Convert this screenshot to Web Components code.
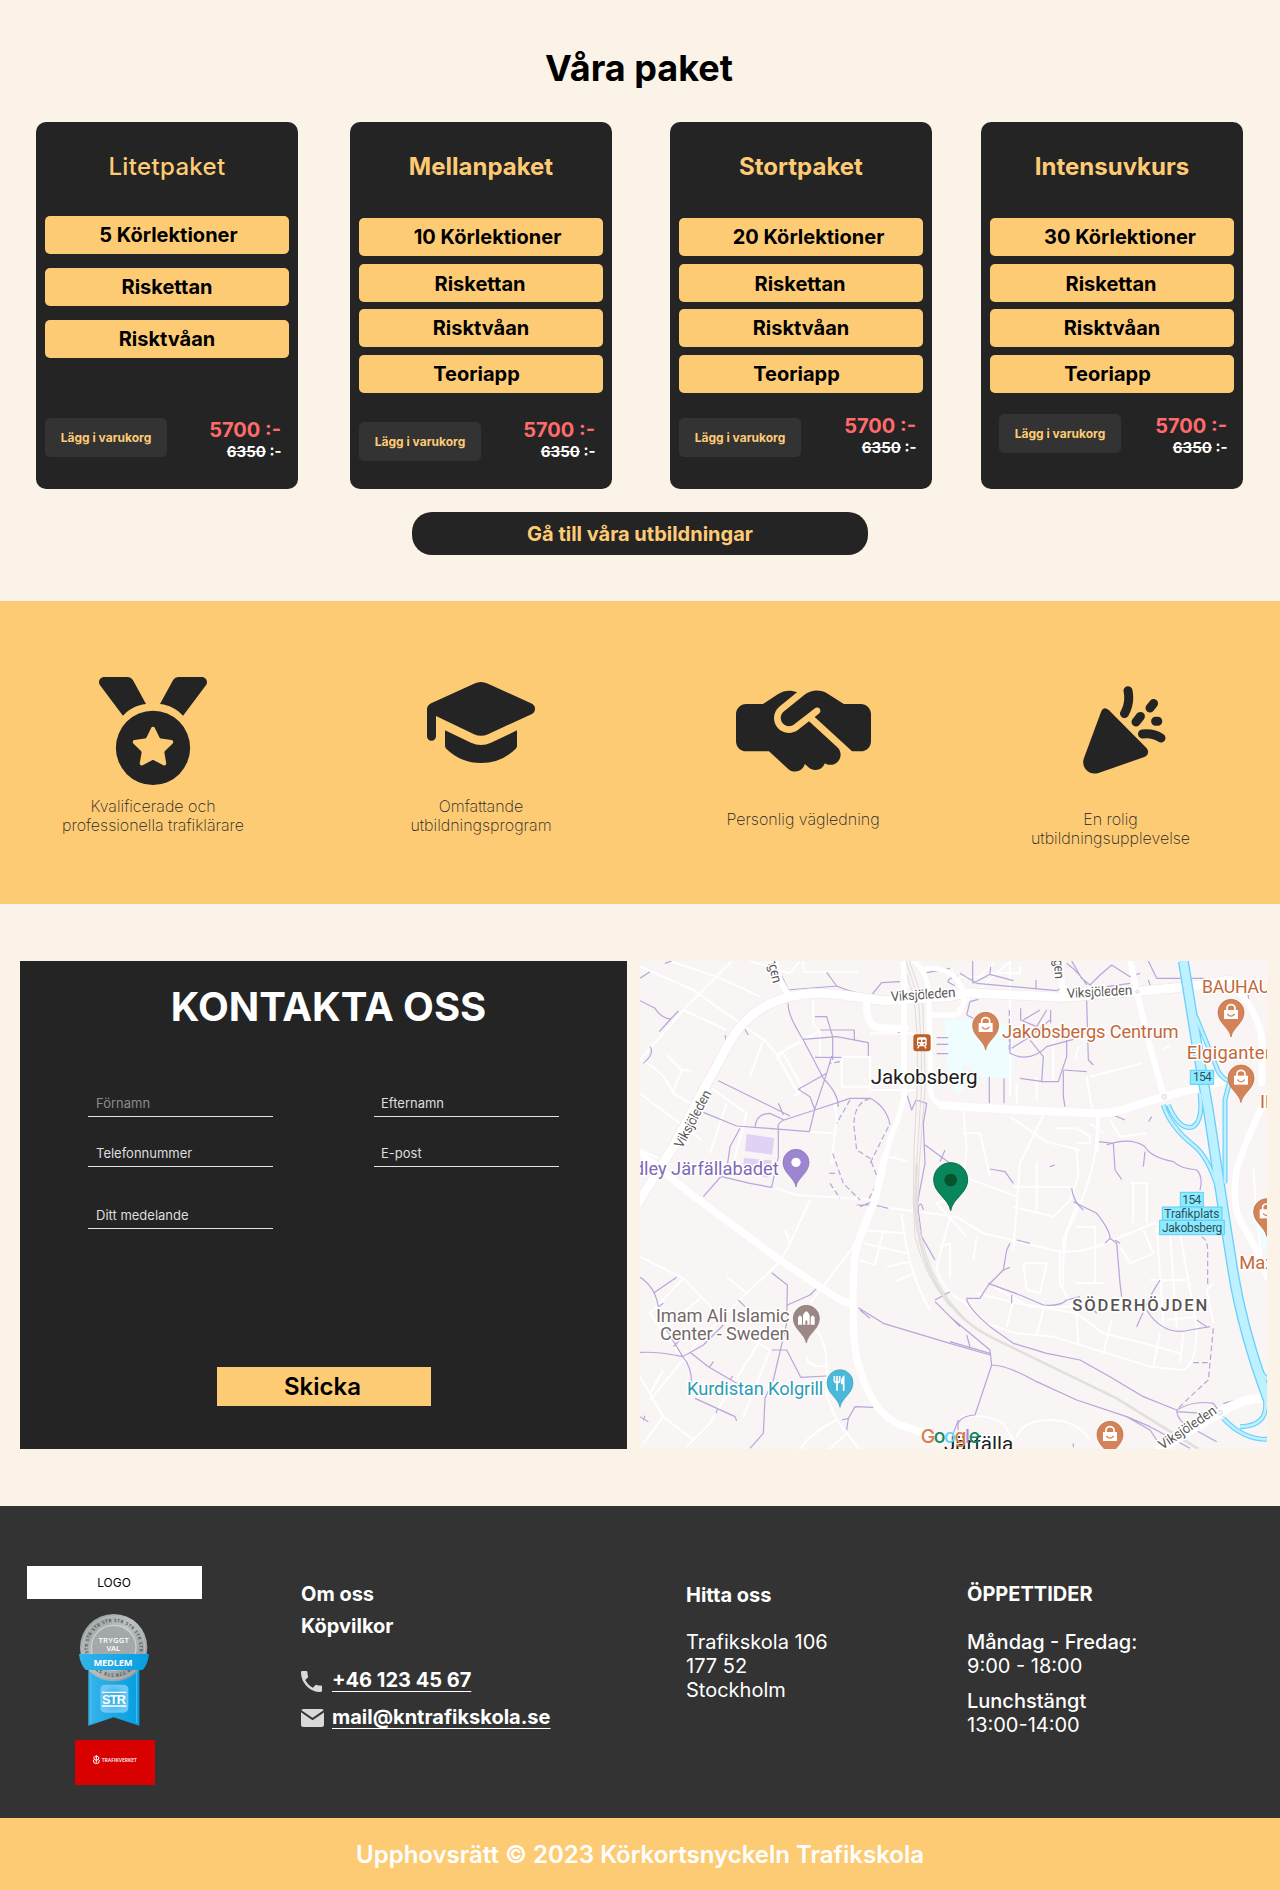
<!DOCTYPE html>
<html lang="sv">
<head>
<meta charset="utf-8">
<title>Körkortsnyckeln Trafikskola</title>
<style>
html,body{margin:0;padding:0}
body{background:#fbf3e7;font-family:Inter,"Liberation Sans",sans-serif;color:#000;width:1280px;overflow-x:hidden}
</style>
</head>
<body>
<packages-section>
  <package-card style="--x:36px;--list:35px;--btn:8px;--price:8px" name="Litetpaket" light gaps="14,14" rows="5 Körlektioner:3|Riskettan:0|Risktvåan:0"></package-card>
  <package-card style="--x:52px;--btn:12px;--price:8px" name="Mellanpaket" rows="10 Körlektioner:13|Riskettan:-2|Risktvåan:0|Teoriapp:-9"></package-card>
  <package-card style="--x:58px;--btn:8px;--price:4px;--pr:16px" name="Stortpaket" rows="20 Körlektioner:15|Riskettan:-2|Risktvåan:0|Teoriapp:-9"></package-card>
  <package-card style="--x:49px;--btn:4px;--price:4px;--pr:16px;--bl:18px" name="Intensuvkurs" rows="30 Körlektioner:16|Riskettan:-2|Risktvåan:0|Teoriapp:-9"></package-card>
</packages-section>

<feature-band>
  <feature-item style="--x:53px;--top:76px;--gap:12px">
    <svg slot="icon" width="108" height="108" viewBox="0 0 512 512" fill="#242424"><path d="M4.1 38.2C1.4 34.2 0 29.4 0 24.6C0 11 11 0 24.6 0H133.9c11.2 0 21.7 5.9 27.4 15.5l61.5 112.1c-48.2 6.1-80.3 24.6-109.4 55.9L4.1 38.2zm503.7 0L398.6 183.5c-29.1-31.3-61.2-49.8-109.4-55.9L350.7 15.5C356.5 5.9 366.9 0 378.1 0H487.4C501 0 512 11 512 24.6c0 4.8-1.4 9.6-4.1 13.6zM80 336a176 176 0 1 1 352 0A176 176 0 1 1 80 336zm184.4-94.9c-3.4-7-13.3-7-16.8 0l-22.4 45.4c-1.4 2.8-4 4.7-7 5.1L168 298.9c-7.7 1.1-10.7 10.5-5.2 16l36.3 35.4c2.2 2.2 3.2 5.2 2.7 8.3l-8.6 49.9c-1.3 7.6 6.7 13.5 13.6 9.9l44.8-23.6c2.7-1.4 6-1.4 8.7 0l44.8 23.6c6.9 3.6 14.9-2.2 13.6-9.9l-8.6-49.9c-.5-3 .5-6.1 2.7-8.3l36.3-35.4c5.6-5.4 2.5-14.8-5.2-16l-50.1-7.3c-3-.4-5.7-2.4-7-5.1l-22.4-45.4z"/></svg>
    Kvalificerade och<br>professionella trafiklärare
  </feature-item>
  <feature-item style="--x:128px;--top:81px;--gap:33.5px">
    <svg slot="icon" width="108" height="81" viewBox="0 0 108 81" fill="#242424"><path d="M47 1.8Q54 -1.6 61 1.8L104.5 21.5Q108 23.3 108 26.7Q108 30.5 104.5 32.2L61 52.2Q54 55.4 47 52.2L9 34V54.2A4.5 4.5 0 0 1 0 54.2V27Q0 23.6 3.6 21.5Z"/><path d="M18 48.3L44 60.8Q54 65.4 64 60.8L90 48.3V64Q90 65.5 88.5 67Q74 81 54 81Q34 81 19.5 67Q18 65.5 18 64Z"/></svg>
    Omfattande<br>utbildningsprogram
  </feature-item>
  <feature-item style="--x:122px;--top:89px;--gap:37.5px">
    <svg slot="icon" width="135" height="82" viewBox="0 62 640 387" fill="#242424"><path d="M323.4 85.2l-96.8 78.4c-16.1 13-19.2 36.4-7 53.1c12.9 17.8 38 21.3 55.3 7.8l99.3-77.2c7-5.4 17-4.2 22.5 2.8s4.2 17-2.8 22.5l-20.9 16.2L550.2 352H592c26.5 0 48-21.5 48-48V176c0-26.5-21.5-48-48-48H516h-4-.7l-3.9-2.5L434.8 79c-15.3-9.8-33.2-15-51.4-15c-21.8 0-43 7.5-60 21.2zm22.8 124.4l-51.7 40.2C263 274.3 217.3 268 193.7 235.6c-22.2-30.5-16.6-73.1 12.7-96.8l83.2-67.3c-11.6-4.9-24.1-7.4-36.8-7.4C234 64 215.7 69.6 200 80l-72 48H48c-26.5 0-48 21.5-48 48V304c0 26.5 21.5 48 48 48H156.2l91.4 83.4c19.6 17.9 49.9 16.5 67.8-3.1c5.5-6.1 9.2-13.2 11.1-20.6l17 15.6c19.5 17.9 49.9 16.6 67.8-2.9c4.5-4.9 7.8-10.6 9.9-16.5c19.4 13 45.8 10.3 62.1-7.5c17.9-19.5 16.6-49.9-2.9-67.8l-134.2-123z"/></svg>
    Personlig vägledning
  </feature-item>
  <feature-item style="--x:107.5px;--top:85px;--gap:35.5px">
    <svg slot="icon" width="83" height="88" viewBox="0 0 83 88" fill="#242424" style="margin-left:27px"><path d="M18.2 25.5Q20.5 19.8 26 24.3L63.5 62Q67.5 67 62 70.8L15.5 87Q7.5 89 2.4 83Q-1 78.5 .8 72.5Z"/><g fill="none" stroke="#242424" stroke-width="9" stroke-linecap="round"><path d="M45 4.7Q47.5 17 41.5 27.6"/><path d="M70.6 17.5L67 22M57.4 30.4L53 36M72.6 35.2H74.8"/><path d="M59.5 48Q70 46.6 78 52"/></g></svg>
    En rolig<br>utbildningsupplevelse
  </feature-item>
</feature-band>

<contact-section></contact-section>
<site-footer></site-footer>

<script>
const define = (name, html, setup) => {
  const t = document.createElement('template');
  t.innerHTML = html;
  customElements.define(name, class extends HTMLElement {
    connectedCallback() {
      if (this.shadowRoot) return;
      const root = this.attachShadow({ mode: 'open' });
      root.appendChild(t.content.cloneNode(true));
      if (setup) setup(this, root);
    }
  });
};

define('package-card', `
<style>
:host{display:flex;flex-direction:column;box-sizing:border-box;width:262px;height:366.5px;margin-left:var(--x);background:#242424;border-radius:10px;padding:31px 9px 0}
h3{margin:0 0 var(--list,37px);font-size:24px;line-height:28px;font-weight:700;color:#fecb75;text-align:center}
:host([light]) h3{font-weight:500;letter-spacing:.35px}
.rows{display:flex;flex-direction:column}
.row{height:38px;line-height:38.6px;border-radius:5px;background:#fecb75;color:#000;text-align:center;font-size:20px;font-weight:700}
.foot{margin-top:auto;height:78.5px;display:flex;justify-content:space-between;align-items:flex-start}
button{all:unset;box-sizing:border-box;width:122px;height:39px;line-height:40px;margin:var(--btn) 0 0 calc(var(--bl,9px) - 9px);border-radius:5px;background:#333;color:#fecb75;text-align:center;font-size:12px;font-weight:700}
.price{margin:var(--price) calc(var(--pr,17px) - 9px) 0 0;text-align:right;font-weight:700}
.now{font-size:20px;line-height:24px;color:#ff6b6b}
.old{font-size:15px;line-height:18px;margin-top:1px;margin-right:-.5px;color:#fff}
</style>
<h3></h3><div class="rows"></div>
<div class="foot"><button>Lägg i varukorg</button><div class="price"><div class="now">5700 :-</div><div class="old"><s>6350</s> :-</div></div></div>`,
(host, root) => {
  root.querySelector('h3').textContent = host.getAttribute('name');
  const gaps = (host.getAttribute('gaps') || '8,7,8').split(',');
  const list = root.querySelector('.rows');
  host.getAttribute('rows').split('|').forEach((r, i) => {
    const [label, shift] = r.split(':');
    const d = document.createElement('div');
    d.className = 'row';
    d.textContent = label;
    d.style.textIndent = shift + 'px';
    if (i) d.style.marginTop = gaps[i - 1] + 'px';
    if (i === 1 && gaps[0] === '8') d.style.lineHeight = '40px';
    list.appendChild(d);
  });
});

define('packages-section', `
<style>
:host{display:flex;flex-direction:column;align-items:center;box-sizing:border-box;height:601px;padding-top:46px}
h2{margin:0;margin-left:-2px;font-size:36px;line-height:44px;font-weight:700}
.cards{display:flex;align-self:stretch;margin:32px 0 23.5px}
a{display:block;width:456px;height:43px;line-height:44px;border-radius:20px;background:#242424;color:#fecb75;text-align:center;font-size:20px;font-weight:700}
</style>
<h2>Våra paket</h2><div class="cards"><slot></slot></div><a>Gå till våra utbildningar</a>`);

define('feature-item', `
<style>
:host{display:flex;flex-direction:column;align-items:center;width:200px;margin-left:var(--x);padding-top:var(--top)}
p{margin:var(--gap) 0 0;font-size:16px;line-height:19.2px;font-weight:200;color:#242424;text-align:center;white-space:nowrap}
</style>
<slot name="icon"></slot><p><slot></slot></p>`);

define('feature-band', `
<style>:host{display:flex;align-items:flex-start;box-sizing:border-box;height:303px;background:#fecb75}</style><slot></slot>`);

define('form-field', `
<style>
:host{display:block;box-sizing:border-box;height:22px;padding-left:8px;border-bottom:1px solid #e3e3e3;font-size:13px;line-height:17px;color:#dedede}
:host([muted]){color:#8b8b8b}
</style><slot></slot>`);

define('contact-form', `
<style>
:host{display:flex;flex-direction:column;box-sizing:border-box;width:607px;height:488px;background:#242424;padding-top:22px}
h2{margin:0;padding-left:10px;text-align:center;color:#fff;font-size:40px;line-height:48px;font-weight:700;letter-spacing:-.05px}
.grid{display:grid;grid-template-columns:185px 185px;column-gap:101px;margin:64px 0 0 68px}
.grid>:nth-child(n+3){margin-top:28px;line-height:16px}
.grid>:nth-child(5){margin-top:40px}
.grid>:nth-child(2),.grid>:nth-child(4){padding-left:7px}
button{all:unset;width:214px;height:39px;line-height:39px;margin:138px 0 0 197px;background:#fecb75;color:#000;text-align:center;text-indent:-3px;font-size:24px;font-weight:600}
</style>
<h2>KONTAKTA OSS</h2>
<div class="grid"><form-field muted>Förnamn</form-field><form-field>Efternamn</form-field><form-field>Telefonnummer</form-field><form-field>E-post</form-field><form-field>Ditt medelande</form-field></div>
<button>Skicka</button>`);

define('area-map', `
<style>
:host{display:block;width:627px;height:488px}
svg{display:block}
text{font-family:Roboto,sans-serif}
.m{fill:none;stroke:#fff;stroke-width:6;stroke-linejoin:round}
.p{fill:none;stroke:#b9a5db;stroke-width:3.6;stroke-linejoin:round}
.d{stroke-dasharray:17 9}
.r{fill:none;stroke:#fff;stroke-linejoin:round;stroke-linecap:round}
.l{paint-order:stroke;stroke:#fff;stroke-width:9;stroke-linejoin:round}
.o{fill:#c4683a}.g{fill:#5c5757;font-size:41px}
</style>
<svg width="627" height="488" viewBox="30 33 1881 1464">
<defs>
<path id="pin" d="M0 74C-5 45 -39 33 -39 0A39 39 0 1 1 39 0C39 33 5 45 0 74Z"/>
<g id="shop"><use href="#pin" fill="#d48358" stroke="#bd6840" stroke-width="2"/><path d="M-21 -7H21V20H-21Z" fill="#fff"/><path d="M-12 -6V-13A12 10 0 0 1 12 -13V-6" fill="none" stroke="#fff" stroke-width="5"/><path d="M-11 5Q0 18 11 5" fill="none" stroke="#d48358" stroke-width="4"/></g>
</defs>
<rect x="30" y="33" width="1881" height="1464" fill="#f8f5f4"/>
<path d="M945 210L1100 205L1148 250L1150 385L1060 385L1000 340L1000 425L975 430L945 320Z" fill="#effdff"/>
<path d="M1860 790L1911 760V920Z" fill="#effdff"/>
<path d="M350 552L433 564L426 614L345 603ZM342 624L388 628L385 648L340 645ZM400 630H424V650H400ZM398 672H420V682H398Z" fill="#dfd2f4"/>
<g class="m">
<path d="M30 50L190 120L345 230L400 270L360 380M120 33L260 80L390 140M160 180L290 240M305 33L160 180L30 330M30 330Q100 360 130 430L215 480M110 315L155 360L185 362M155 360L130 425M30 430L215 570M245 415L350 490L310 640M290 460L240 610M400 265L440 315L505 430M440 315L510 275M460 310L520 420L490 440M360 33L480 70L510 33M520 33V65H686M550 150V225L570 240V320H720V420H860M720 250H835Q860 250 850 270M635 320V410H720M610 440L620 500L605 640M440 330Q460 290 510 280L570 240M30 600L120 640M440 715L500 735L740 750M535 545L610 550"/>
<path d="M780 620L830 633M1000 480L1010 600L1000 680L1160 740M1000 550H1050L1080 680M1140 500L1250 575L1350 600M1240 495L1170 640L1150 900M1400 500Q1410 600 1360 740L1310 850L1300 930M1150 710H1320M1220 640V780M1280 535H1340L1380 560V580H1340M1340 600L1345 680L1320 750M1440 510L1470 560L1550 550M1380 520L1420 550M1370 380L1390 500M1380 380L1535 340M1220 380V450M1335 330L1345 290M1270 270V400M1160 400V460M1510 700V820M1550 700V820M1500 700H1555M980 180L1140 33M980 80H1050L1090 40M1080 70H1170V50M1140 33V440M1600 300L1620 285M1870 650L1880 800L1900 960"/>
<path d="M30 920L160 985L290 1120L420 1200M290 980L350 1030L450 935L480 880L540 750M465 840L480 880M350 1030L200 1180L60 1350M160 985L60 1090L170 1240M210 1045L100 1140M390 1170L240 1420L170 1490M420 1200L340 1400M30 1280L100 1400L190 1470M100 1400L40 1480M100 1260L60 1330M540 1060L670 890L720 760M560 1140Q590 1180 590 1250V1340L620 1410L690 1500M530 1220Q530 1250 590 1250M620 1410Q540 1450 510 1497M650 1450L600 1497M760 840L735 945L690 930M700 880L830 910M690 840L830 850M815 790Q830 960 900 1080M770 950L840 935M795 995L850 970M1010 860L920 760L970 740"/>
<path d="M750 770L980 800L1060 850L1290 905Q1370 910 1450 870L1570 820L1640 830M960 800L920 950Q930 1020 1010 1060M930 890L960 880V980M1290 905V1000L1340 1100L1345 1180M1345 750L1300 870V1010M1000 1055L1070 1120L1160 1150L1270 1160L1400 1200L1560 1250L1660 1260Q1700 1240 1700 1130L1650 850M1040 1030L1160 1060L1340 1090L1420 1150L1540 1180L1650 1210M1090 1010L1200 1070L1320 1070M1130 1130L1150 1050M1220 1155L1240 1080M1420 1210L1445 1110M1570 1250L1590 1150M1660 1150L1650 1240M1180 940H1250L1230 1030L1190 1020L1180 940M1340 830H1395V1000M1335 1000H1420M1470 890L1500 940L1570 910L1540 840M1580 830L1600 1120M1560 990H1670M1040 860L1030 930M1620 850L1640 1130M1610 1110L1700 1100M990 1400Q1070 1390 1120 1420L1150 1470M1160 1460Q1180 1410 1260 1410Q1340 1410 1380 1470M1150 770L1270 800L1320 750M1750 1120L1730 1020L1750 1000"/>
</g>
<g class="p">
<path d="M30 85L60 65M105 40L125 33M30 152L75 175Q95 205 122 207L145 183M122 207L88 245M60 290Q75 310 40 340M235 380L290 280L285 255M330 215L355 255M265 392L480 498M445 460L460 495M220 487L320 528L375 532L538 545L555 475L590 370M375 530Q380 490 420 490L462 510Q440 520 445 535V620L425 712L360 700L275 680M330 535L300 590L290 660L220 740M555 480L462 510M555 480L660 445H720Q770 470 780 525M555 322H635M605 318L590 370L505 418L540 440L555 480M475 160Q470 190 520 270L580 385Q625 430 625 470M520 268L620 260L715 278V318M570 240H673V270M555 200H590L608 260V330M470 120L620 108L590 67M475 120L450 67M620 108Q670 130 725 135L755 98L810 95M790 240L810 248M832 437L845 480L858 450L890 460L880 520L885 640L862 760L875 860L915 930M885 585L960 640M930 635L945 600M920 263H955M920 283H955M920 311H955M890 68L960 55M985 78Q950 85 955 97L975 107"/>
<path d="M990 70L1040 100L1280 122L1300 110M1028 33V100M1030 100L1080 73L1150 92M1080 73L1082 50M1218 90V120M1325 33L1355 85L1380 105L1410 75L1445 45L1500 80L1530 70M1310 40Q1350 70 1370 105M1430 110L1500 100M1555 33L1580 85H1720L1780 110M1555 90L1560 105M1010 195L1020 155L1045 148M1010 195L1030 205M1172 175V210L1220 230L1250 180M1180 210L1230 180M1262 180V220M1140 265V310Q1200 340 1250 290L1330 268M1145 295L1200 260L1260 210M1200 270L1240 320L1235 395H1285L1310 320V270M1370 150L1375 330L1390 345M1300 360L1370 365M1300 362V440L1305 470M1170 385L1240 395M1078 380V460M1122 385V460M1405 575L1450 580L1455 660L1475 688M1430 585Q1500 560 1545 590Q1560 620 1630 635Q1650 655 1700 660Q1720 680 1710 720M1545 605L1540 650M1450 495L1485 510M1556 515L1565 500M1080 657L1125 665L1150 700M1260 650L1275 645M1325 715Q1330 755 1360 780"/>
<path d="M30 982Q75 1010 85 1070L100 1060M72 1028L140 982M30 1207Q90 1205 158 1220L220 1185L280 1125M158 1220Q185 1250 185 1300M180 1207L235 1250L320 1300M238 1252L250 1235M300 1290L308 1278M130 1190L150 1170M110 1140L158 1220M425 968L472 1005L470 1120L430 1290L405 1345L400 1450L360 1495M472 1065L540 1035L560 1015M325 1050L345 1070M425 1200H470L512 1282L590 1278M195 1345L315 1400L320 1412M258 1390L263 1375M30 1400L55 1415M40 1410L45 1397M635 1410L655 1405L675 1370L730 1372M655 1405L650 1440M685 1073L760 1120L960 1180L1080 1215M690 1080L720 1105M985 1410L970 1450M680 765H735L775 775M690 770L740 750"/>
<path d="M860 790Q870 740 880 780M1330 755L1400 790Q1440 840 1440 865L1460 880L1470 1000L1475 1040M1440 865L1425 880M1455 870L1470 880M1120 960L1075 1005L1050 1045L1010 1045Q1010 1070 1080 1130L1150 1180L1250 1210L1350 1230L1440 1280L1540 1340L1640 1380M1120 960L1130 900L1140 880M1120 960L1140 952M1075 1000L1170 1035L1240 1065Q1290 1070 1310 1050L1350 1040M1145 1035V1060M960 1100L1080 1200L1085 1245L1035 1395Q975 1400 985 1440M960 1175L1080 1210M1010 1155L1020 1190M1085 1245Q1130 1245 1220 1295L1340 1350L1490 1400L1560 1440L1590 1485M1490 1400L1560 1430L1680 1495M1640 1380Q1640 1400 1660 1420L1760 1475M1640 1380Q1690 1350 1750 1360L1780 1400M1640 1385L1720 1390M915 1050L960 1025M915 1055L990 1130M1590 990L1560 1040L1520 1130M1550 1080Q1600 1160 1680 1140L1740 1130M1700 1110L1730 1130M1160 870L1200 880M1385 1070L1400 1090M1330 1492V1480M1780 1360L1860 1340"/>
<path class="d" d="M720 445Q670 460 672 530L680 600L720 625L745 690L715 750M775 530L720 640M660 450L620 520M630 335L600 340M608 610L640 700L690 750M598 670H625M600 700L630 745M1138 180V300M1855 135V175M1715 860Q1735 870 1733 910V1005M1750 1135L1735 1290Q1690 1330 1640 1380M1690 1238H1740"/>
</g>
<g fill="none" stroke="#dfdbd9" stroke-width="3"><path d="M817 33L852 140L862 260V400L852 600L850 750L855 860Q885 980 960 1070M838 33L878 150L886 400L868 640L862 780Q880 980 1000 1100M828 33L866 150L874 300V420L860 640"/><path stroke-width="8" d="M860 640L856 780Q870 970 980 1085Q1020 1130 1090 1165L1460 1345L1705 1497" stroke="#e3dfdd"/></g>
<path class="r" stroke-width="31" style="stroke:#eeeae9" d="M20 765L130 590L220 420L300 275Q360 170 480 140Q560 120 660 138L760 152L960 140L1010 128L1300 142L1520 125L1690 108L1800 90"/>
<g class="r" stroke-width="27">
<path d="M20 765L130 590L220 420L300 275Q360 170 480 140Q560 120 660 138L760 152L960 140L1010 128L1300 142L1520 125L1690 108L1800 90"/>
<path stroke-width="22" d="M20 600L130 690L200 745L450 930L560 1005L640 1055L665 1058"/>
<path stroke-width="22" d="M710 150Q705 232 755 234L825 236"/>
<path stroke-width="17" d="M822 70V440Q810 500 782 560L750 680"/>
<path stroke-width="22" d="M765 620L735 750L695 850Q670 900 670 1000Q665 1200 690 1260Q730 1390 810 1425L900 1455"/>
<path stroke-width="15" d="M820 33V240M850 33Q895 60 897 150L902 420Q905 462 950 466M905 195H980Q1005 180 1000 130M890 55Q980 50 1000 130"/>
<path stroke-width="24" d="M935 466L1160 480L1400 490Q1460 490 1510 468L1600 440L1811 385"/>
<path stroke-width="18" d="M1502 33L1520 125L1560 290L1602 440M1300 142L1290 33M475 135L450 90L435 33"/>
<path stroke-width="11" d="M1405 490L1400 600"/>
<path stroke-width="20" d="M1820 120Q1880 180 1895 260V400M1911 440Q1850 560 1820 660Q1805 760 1830 810L1880 900L1911 980"/>
<path stroke-width="27" d="M1911 1345Q1840 1340 1770 1388L1590 1497"/>
</g>
<g fill="none" stroke="#6dcffb" stroke-width="15"><path d="M1698 200L1765 365Q1785 395 1800 390M1800 390L1785 450L1785 700M1600 465Q1620 530 1690 585Q1735 620 1765 720M1615 465Q1650 545 1690 530Q1720 510 1710 430M1860 1210Q1880 1260 1915 1290M1780 1405Q1840 1470 1915 1468M1830 1430Q1920 1430 1905 1340"/><path stroke-width="33" d="M1660 33L1700 280L1735 480L1780 780L1810 970Q1840 1150 1915 1350"/></g>
<g fill="none" stroke="#bdf1ff" stroke-width="8"><path d="M1698 200L1765 365Q1785 395 1800 390M1800 390L1785 450L1785 700M1600 465Q1620 530 1690 585Q1735 620 1765 720M1615 465Q1650 545 1690 530Q1720 510 1710 430M1860 1210Q1880 1260 1915 1290M1780 1405Q1840 1470 1915 1468M1830 1430Q1920 1430 1905 1340"/><path stroke-width="25" d="M1660 33L1700 280L1735 480L1780 780L1810 970Q1840 1150 1915 1350"/></g>
<g fill="#f8f5f5" stroke="#dedada" stroke-width="3"><circle cx="1603" cy="440" r="7"/><circle cx="1770" cy="1388" r="7"/><circle cx="1522" cy="125" r="5"/></g>

<g fill="#8eeaff" stroke="#62cdf5" stroke-width="3"><rect x="1681" y="361" width="70" height="42"/><rect x="1651" y="727" width="69" height="44"/><rect x="1597" y="771" width="179" height="40"/><rect x="1589" y="811" width="194" height="43"/></g>
<g fill="#27535f" font-size="36"><text x="1689" y="394" textLength="56">154</text><text x="1657" y="761" textLength="57">154</text><text x="1603" y="803" textLength="165">Trafikplats</text><text x="1596" y="846" textLength="181">Jakobsberg</text></g>

<g class="l g"><text transform="translate(783 154) rotate(-4)" textLength="195">Viksjöleden</text><text transform="translate(1311 144) rotate(-3)" textLength="197">Viksjöleden</text><text transform="translate(156 597) rotate(-62)" textLength="190">Viksjöleden</text><text transform="translate(1597 1500) rotate(-34)" textLength="200">Viksjöleden</text><text transform="translate(411 28) rotate(76)" textLength="76">ngen</text><text transform="translate(1270 10) rotate(86)" textLength="78">ngen</text></g>
<text class="l" x="722" y="401" font-size="62" textLength="321" fill="#212121" stroke-width="7">Jakobsberg</text>
<g class="l o" font-size="55"><text x="1116" y="263" textLength="530">Jakobsbergs Centrum</text><text x="1716" y="129" textLength="235" font-size="53">BAUHAUS</text><text x="1670" y="328" textLength="265">Elgiganten</text><text x="1890" y="474">IKEA</text><text x="1828" y="957">Max</text></g>
<text class="l" x="-66" y="674" font-size="55" textLength="512" fill="#7f68b5">Medley Järfällabadet</text>
<g class="l" fill="#766a6a" font-size="55"><text x="78" y="1115" textLength="401">Imam Ali Islamic</text><text x="90" y="1169" textLength="389">Center - Sweden</text></g>
<text class="l" x="171" y="1335" font-size="55" textLength="409" fill="#2c9cb3">Kurdistan Kolgrill</text>
<text class="l" x="1327" y="1083" font-size="50" font-weight="500" textLength="405" fill="#5a5555">SÖDERHÖJDEN</text>
<text class="l" x="942" y="1503" font-size="62" textLength="208" fill="#212121">Järfälla</text>
<text x="872" y="1478" style="font-family:Inter,sans-serif" font-size="58" font-weight="500" textLength="178"><tspan fill="#d4814f">G</tspan><tspan fill="#12895e">o</tspan><tspan fill="#63d2f4">o</tspan><tspan fill="#d4814f">g</tspan><tspan fill="#a58bd8">l</tspan><tspan fill="#12895e">e</tspan></text>

<g><rect x="850" y="253" width="52" height="51" rx="9" fill="#bd5f2b"/><rect x="861" y="262" width="29" height="27" rx="6" fill="#fff"/><path d="M865 269H873V276H865ZM877 269H886V276H877Z" fill="#bd5f2b"/><circle cx="867" cy="283" r="3" fill="#bd5f2b"/><circle cx="883" cy="283" r="3" fill="#bd5f2b"/><path d="M867 288L863 295M884 288L888 295" stroke="#fff" stroke-width="4"/></g>
<g transform="translate(498 637)"><use href="#pin" fill="#9c86cf" stroke="#856bbd" stroke-width="2"/><circle r="14" fill="#fff"/></g>
<use href="#shop" x="1067" y="226"/><use href="#shop" x="1803" y="187"/><use href="#shop" x="1833" y="384"/><use href="#shop" x="1910" y="785"/><use href="#shop" x="1440" y="1453"/>
<g transform="translate(529 1105)"><use href="#pin" fill="#9b8785" stroke="#857370" stroke-width="2"/><path d="M-25 19V-3L-19 -9L-13 -3V19ZM-10 19V-9Q-10 -15 0 -22Q10 -15 10 -9V19ZM13 19V-3L19 -9L25 -3V19Z" fill="#fff"/><path d="M-3 19V8Q0 3 3 8V19Z" fill="#9b8785"/></g>
<g transform="translate(630 1298)"><use href="#pin" fill="#4ab8d8" stroke="#359fc0" stroke-width="2"/><path d="M-17 -20V-8Q-17 0 -9 0T-1 -8V-20M-9 -20V24M11 24V-17Q5 -12 5 2H11" fill="none" stroke="#fff" stroke-width="5"/></g>
<g transform="translate(962 690)"><path d="M0 92C-6 55 -51 40 -51 -1A51 51 0 1 1 51 -1C51 40 6 55 0 92Z" fill="#07875b" stroke="#047349" stroke-width="3"/><circle r="19" fill="#05522c"/></g>
</svg>`);

define('contact-section', `
<style>:host{display:flex;gap:13px;box-sizing:border-box;height:602px;padding:57px 0 0 20px}</style>
<contact-form></contact-form><area-map></area-map>`);

define('member-badge', `
<style>:host{display:block;margin-left:-1.5px}svg{display:block}text{font-family:"Open Sans",sans-serif;text-anchor:middle;fill:#fff}</style>
<svg width="70" height="112" viewBox="57 40 210 336">
<defs><linearGradient id="s" x1="0" y1="0" x2="1" y2="1"><stop offset="0" stop-color="#8e9597"/><stop offset=".45" stop-color="#bfc3c4"/><stop offset="1" stop-color="#858c8e"/></linearGradient><linearGradient id="b"><stop offset="0" stop-color="#35b3ea"/><stop offset="1" stop-color="#059ee0"/></linearGradient><radialGradient id="q"><stop offset="0" stop-color="#27aae6"/><stop offset="1" stop-color="#6cc8f2"/></radialGradient><path id="ring" d="M161 218A77 77 0 1 1 161.1 218"/></defs>
<path d="M85 195H238V375L161 350L85 375Z" fill="url(#b)"/><path d="M93 200V366M230 200V366" stroke="#4fc0f0" stroke-width="3"/>
<circle cx="161" cy="141" r="101" fill="url(#s)"/><circle cx="161" cy="141" r="93" fill="none" stroke="#b9bebf" stroke-width="3"/><circle cx="161" cy="141" r="67" fill="#a3a9ab" stroke="#cdd1d2" stroke-width="4"/>
<text font-size="14" font-weight="700" style="text-anchor:start;fill:#555d60" textLength="478"><textPath href="#ring">STR STR STR STR STR STR STR STR STR STR STR STR STR STR</textPath></text>
<path d="M57 160H267Q264 190 248 208H77Q60 190 57 160Z" fill="url(#b)"/>
<text x="161" y="126" font-size="23" font-weight="600" textLength="91">TRYGGT</text><text x="160" y="151" font-size="23" font-weight="600" textLength="41">VAL</text><text x="159" y="195" font-size="28" font-weight="700" textLength="117">MEDLEM</text>
<rect x="121" y="252" width="84" height="84" rx="14" fill="url(#q)"/><path d="M126 275H199M126 316H199" stroke="#fff" stroke-width="4"/><text x="162" y="309" font-size="38" textLength="72" style="font-family:'Liberation Sans',sans-serif;font-weight:700">STR</text>
</svg>`);

define('agency-logo', `
<style>:host{display:flex;width:80px;height:45px;background:#d90000}text{font-family:"Open Sans",sans-serif;fill:#fff}</style>
<svg width="80" height="45" viewBox="45 420 240 135"><g fill="none" stroke="#fff" stroke-width="3"><path d="M109 465V488M102 470V478Q109 484 116 478V470M100 480Q99 491 109 491T118 480M104 468L109 472L114 468"/></g><text x="125" y="486" font-size="16" font-weight="600" textLength="106" lengthAdjust="spacingAndGlyphs">TRAFIKVERKET</text></svg>`);

define('site-footer', `
<style>
:host{display:block;color:#fff;font-size:20px;line-height:24px}
.main{display:flex;height:312px;background:#333}
.marks{display:flex;flex-direction:column;align-items:center;width:175px;margin:60px 99px 0 27px}
.logo{width:175px;height:33px;line-height:34px;margin-bottom:14.5px;background:#fff;color:#000;text-align:center;text-indent:-1px;font-size:12px}
agency-logo{margin:14.5px 0 0 1px}
b{display:block;font-weight:700}
.links{width:385px;padding-top:76px}
.links b+b{margin-top:8px}
.contact{display:flex;align-items:center;margin-top:30px;font-weight:700}
.contact+.contact{margin-top:13px}
.contact svg{width:31.5px;margin-right:-.5px;flex:none}
.contact span{text-decoration:underline;text-decoration-thickness:1.4px;text-underline-offset:4px;text-decoration-skip-ink:none}
.find{width:281px;padding-top:77px}
.find p{margin:23px 0 0;font-weight:400}
.hours{padding-top:76px}
.hours p{margin:24px 0 0;font-weight:500}
.hours p+p{margin-top:11px}
.hours span{font-weight:400}
.copy{height:72px;line-height:73px;background:#fecb75;text-align:center;font-size:24px;font-weight:600}
</style>
<div class="main">
<div class="marks"><div class="logo">LOGO</div><member-badge></member-badge><agency-logo></agency-logo></div>
<div class="links"><b>Om oss</b><b>Köpvilkor</b>
<div class="contact"><svg height="21" viewBox="0 0 31.5 21" fill="#d9d9d9" style="margin-top:3px"><path d="M4.2 9.1c1.7 3.3 4.4 6 7.7 7.7l2.5-2.6c.3-.3.8-.4 1.2-.3 1.3.4 2.7.7 4.2.7.6 0 1.2.5 1.2 1.2v4c0 .7-.6 1.2-1.2 1.2C8.9 21 0 12.1 0 1.2 0 .5.5 0 1.2 0h4.1c.6 0 1.1.5 1.1 1.2 0 1.5.3 2.9.7 4.2.1.4 0 .8-.3 1.2z"/></svg><span>+46 123 45 67</span></div>
<div class="contact"><svg height="18" viewBox="0 0 31.5 18" style="margin-top:1px"><rect width="23" height="18" rx="2.5" fill="#d9d9d9"/><path d="M-.5 1.8L11.5 10L23.5 1.8" fill="none" stroke="#333" stroke-width="2"/></svg><span>mail@kntrafikskola.se</span></div></div>
<div class="find"><b>Hitta oss</b><p>Trafikskola 106<br>177 52<br>Stockholm</p></div>
<div class="hours"><b>ÖPPETTIDER</b><p>Måndag - Fredag:<br><span>9:00 - 18:00</span></p><p>Lunchstängt<br><span>13:00-14:00</span></p></div>
</div>
<div class="copy">Upphovsrätt © 2023 Körkortsnyckeln Trafikskola</div>`);
</script>
</body>
</html>
